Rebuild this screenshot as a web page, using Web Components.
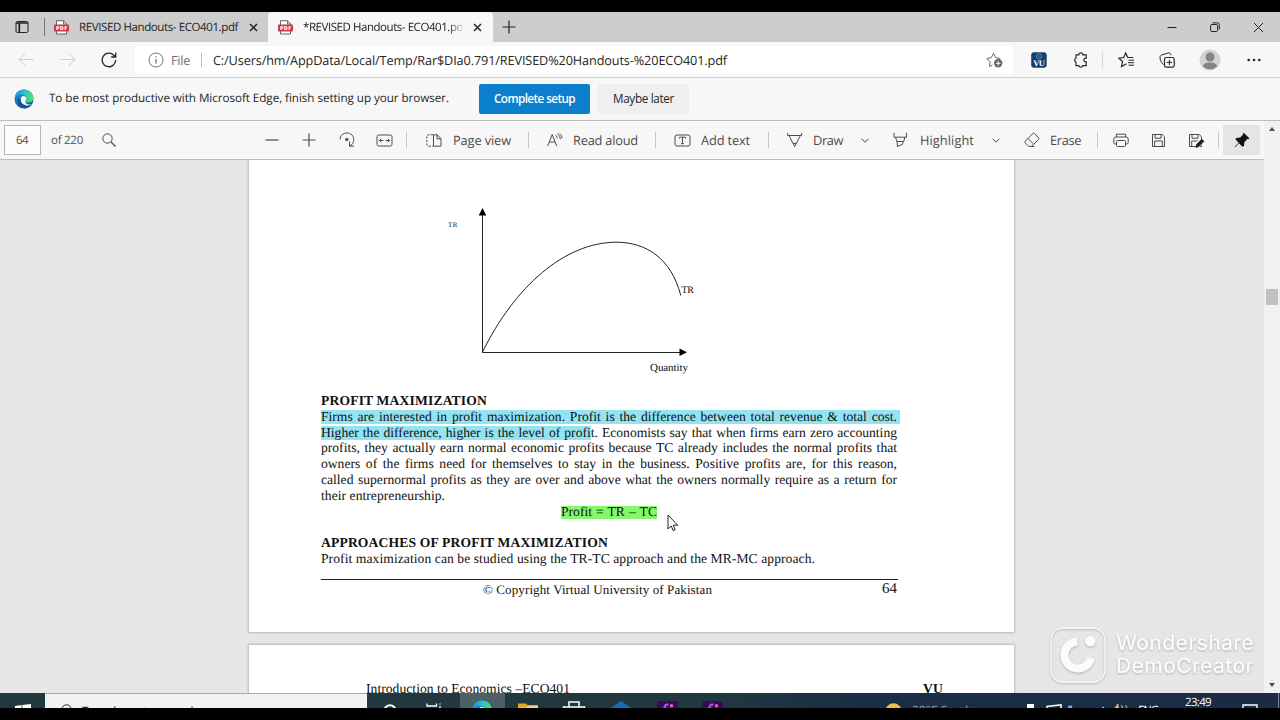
<!DOCTYPE html>
<html lang="en">
<head>
<meta charset="utf-8">
<title>*REVISED Handouts- ECO401.pdf</title>
<style>
  html, body { margin: 0; width: 1280px; height: 720px; overflow: hidden; background: #000; }
</style>
</head>
<body>
<screen-frame></screen-frame>

<script>
// icons: [width, height, markup]
const PDF_ICON = '<path d="M2.5.7h7L12.5 4v10h-10z" fill="#fff" stroke="#555" stroke-width=".9"/><path d="M9.5.7V4h3" fill="none" stroke="#555" stroke-width=".8"/><rect y="4.6" width="15" height="7" rx=".8" fill="#d13548" stroke="none"/><text x="1.9" y="10.1" textLength="11.2" font-family="Open Sans, sans-serif" font-size="5.4" font-weight="800" fill="#fff" stroke="none">PDF</text>';
const EDGE_ICON = '<defs><linearGradient id="a" x1="0" y1=".3" x2="1" y2=".5"><stop offset="0" stop-color="#1795d4"/><stop offset=".5" stop-color="#2bc4cf"/><stop offset="1" stop-color="#58dc62"/></linearGradient><linearGradient id="b" x1="0" y1="0" x2=".5" y2="1"><stop offset="0" stop-color="#1aa0e0"/><stop offset="1" stop-color="#1257a6"/></linearGradient></defs><circle cx="10" cy="10" r="9.5" fill="url(#b)"/><path d="M.6 9C1.3 3.8 5.200.5 10 .5c5.500 0 9.500 3.900 9.500 8.200 0 3-2.200 4.900-5 4.900-2 0-3.100-.8-3.100-1.700 0-.8.8-1.100.8-2.400C12.200 7.200 10 5.600 7.200 5.600 4 5.600 1.500 7 .6 9z" fill="url(#a)"/><path d="M12.200 9.500c0-1.500-1.200-2.500-2.700-2.500C7.700 7 6.500 9 6.500 11.200c0 3.600 3.200 6 6.700 6 2.300 0 4-.8 5.300-2.200-1.300.6-2.700.8-4 .4-2.500-.6-3.700-2.200-3.100-3.500.3-.6.8-1.100.8-2.400z" fill="#f5f9fb"/><path d="M3.800 10.500c-.5 4.500 2.800 8.300 7.400 8.900 3-.3 5.600-1.900 7.200-4.300-1.700 1.300-4.300 1.800-6.900 1.100-3.300-.8-5.200-3.400-5-6.200-.8-.6-2.100-.6-2.700.5z" fill="#164f96"/>';
const FLOPPY = '<path d="M1.500 1.500h9.700l2.300 2.300v9.700h-12z"/><path d="M4 1.500v3.700h6V1.500M3.700 13.500V8h7.600v5.500"/>';
const ICONS = {
  tabs: [14, 14, '<rect x="1" y="1.500" width="12" height="11" rx="1.500"/><path d="M1 3h12M4.300 3v9.500" stroke-width="1.700"/>'],
  pdf: [15, 15, PDF_ICON],
  close: [9, 9, '<path d="M1 1l7 7M8 1L1 8" stroke-width="1.500"/>'],
  plus: [14, 14, '<path d="M7 .5v13M.5 7h13" stroke-width="1.200"/>'],
  minus: [14, 14, '<path d="M.5 7h13" stroke-width="1.200"/>'],
  winMin: [10, 10, '<path d="M.5 5.500h9" stroke-width="1.100"/>'],
  winMax: [10, 10, '<rect x=".6" y="2.500" width="7" height="7" rx="1.300"/><path d="M2.600.9H7.500Q9.300.9 9.300 2.600V7.500"/>'],
  winClose: [11, 11, '<path d="M1 1l9 9M10 1l-9 9"/>'],
  back: [16, 16, '<path d="M15.500 7.500H1M7.500 1L1 7.500 7.500 14"/>'],
  forward: [16, 16, '<path d="M.5 7.500H15M8.500 1L15 7.500 8.500 14"/>'],
  reload: [16, 16, '<path d="M14.700 8A6.800 6.800 0 1 1 12.800 3.200L14.500 5M14.700.5V5H10.200" stroke-width="1.300"/>'],
  info: [16, 16, '<circle cx="8" cy="8" r="7"/><path d="M8 7v4.700M8 4.200v1.300" stroke-width="1.300"/>'],
  starAdd: [17, 16, '<path d="M6.500 13l-3 1.500.7-4.600L.8 6.500l4.500-.8L7.500 1.200l2.200 4.500 4.500.8-1.200 1.200"/><circle cx="12.200" cy="11.300" r="4.200" fill="currentColor" stroke="none"/><path d="M12.200 9v4.600M9.900 11.300h4.600" stroke="#fff"/>'],
  vu: [16, 16, '<rect width="15.500" height="15.500" x=".2" y=".2" rx="3" fill="#123f73" stroke="none"/><circle cx="8" cy="4.200" r="2.600" stroke="#7f9bbb" stroke-width=".7"/><path d="M6 2.500l4 3.500M6 6l4-3.500" stroke="#6686ac" stroke-width=".5"/><text x="2.300" y="13.500" textLength="11.500" font-family="Liberation Serif, serif" font-size="8.500" font-weight="700" fill="#fff" stroke="none">VU</text>'],
  puzzle: [15, 16, '<path d="M3 2.800h2.800a2 2 0 0 1 4 0h3.400v3.400a1.900 1.900 0 1 0 0 3.700v3.800H9.700a2 2 0 0 1-3.900 0H3v-3.600a2 2 0 0 1 0-3.800z" stroke-width="1.200"/>'],
  favorites: [17, 16, '<path d="M8.500 11.800L3.500 14.500l1-5L.9 6.200l4.800-.7L7.700 1l2 4.500h5.600" stroke-width="1.200"/><path d="M10.500 8.200h5.500M10 10.700h6M10.500 13.200h5.500"/>'],
  collections: [16, 16, '<rect x="5.500" y="5.500" width="9.700" height="9.700" rx="1.800" stroke-width="1.200"/><path d="M10.400 7.700v5.300M7.700 10.400H13M4.500 12.700C2.600 11 1 7.800 1 5.500 1 4 1.700 3.300 3 2.900L9.400.9c1.500-.4 2.300.8 2.700 2.500"/>'],
  avatar: [22, 22, '<circle cx="11" cy="11" r="10.500" fill="#d4d2cf" stroke="none"/><circle cx="11" cy="8" r="4.500" fill="#858382" stroke="none"/><path d="M4 17.500c0-3 3-4 7-4s7 1 7 4a10.500 10.500 0 0 1-14 0z" fill="#858382" stroke="none"/>'],
  dots: [14, 4, '<circle cx="1.700" cy="2" r="1.300" fill="currentColor" stroke="none"/><circle cx="7" cy="2" r="1.300" fill="currentColor" stroke="none"/><circle cx="12.300" cy="2" r="1.300" fill="currentColor" stroke="none"/>'],
  edge: [20, 20, `<g stroke="none">${EDGE_ICON}</g>`],
  search: [14, 14, '<circle cx="5.500" cy="5.500" r="4.700"/><path d="M9 9l4.500 4.500" stroke-width="1.200"/>'],
  rotate: [16, 16, '<path d="M1 7.500C1 3.500 4.200 1 8 1c4 0 6.800 3 6.800 6.500 0 3-1.700 5.500-4.300 6.500M10.500 9.500V14.200H15"/><circle cx="7.800" cy="7.500" r="1.200" fill="currentColor"/>'],
  fit: [17, 13, '<rect x="1" y="1" width="15" height="11" rx="1.700"/><path d="M3.500 6.500h4M9.500 6.500h4M5.200 4.700L3.500 6.500l1.700 1.800M11.800 4.700l1.700 1.800-1.700 1.800"/>'],
  pageView: [16, 13, '<path d="M7 .8H3Q.8.800.8 3v7q0 2.200 2.200 2.200h4" stroke-dasharray="2.200 1.300"/><path d="M7.500.8h3.700L15 4.700v7.500H7.500zM11 .8v4h4"/>'],
  readAloud: [16, 14, '<path d="M.7 13L5.200 1.500 9.700 13M2.300 9h5.800M8.500 2.200c1.200.8 1.600 1.900 1.600 3.200M10.300.7c2 1.200 3 3 2.900 5.500M12.500.3c1.500 1.200 2.400 2.900 2.400 5"/>'],
  addText: [17, 13, '<rect x="1" y="1" width="15" height="11" rx="2"/><path d="M5.500 4.500V3.200h6v1.300M8.500 3.200v6.500M7 9.700h3"/>'],
  draw: [16, 16, '<path d="M.7 1v2.500h14V1M2 3.500L7.700 14.500 13.400 3.500M6 11.500h3.400"/>'],
  highlight: [15, 16, '<path d="M1 .8v4.400h12.500V.8M2.700 5.200l1 4.300h7l1.200-4.300M4.300 9.500v5L9.500 12.300l.8-2.800"/>'],
  chevron: [8, 5, '<path d="M.5.700L4 4.200 7.500.7"/>'],
  erase: [16, 16, '<path d="M8.900 1.500L1.200 9.200q-.8.800 0 1.600l3.500 3.500h3l6.900-6.900q.8-.8 0-1.600L10.500 1.500q-.8-.8-1.600 0zM4.200 6.700l5 5M7 14.500h3.500"/>'],
  print: [16, 15, '<path d="M3.300 4V1.200h9.400V4M3.500 11H2.200Q.8 11 .8 9.500V6Q.8 4 2.800 4h10.400q2 0 2 2v3.500q0 1.500-1.400 1.500h-1.300"/><rect x="3.500" y="7.500" width="9" height="6" rx="1"/>'],
  save: [15, 15, FLOPPY],
  saveAs: [16, 15, FLOPPY + '<path d="M8.200 13.200L14 7.300" stroke="#f7f7f7" stroke-width="5.500"/><path d="M8 14.300l.6-2.800 5.200-5.200 2 2-5.100 5.300z" fill="#222" stroke="#222"/>'],
  pin: [16, 16, '<path d="M9.700.7l5.600 5.600-1 1-1-.2-3 3.200-.3 3.400-1.500 1L5 11.200 1 15.200l-.4-.4L4.700 10.700 1.300 7.300l1.200-1.400 3.700-.3 3-3-.3-1z" fill="currentColor" stroke="none"/>'],
  cursor: [12, 18, '<path d="M1 1v14l3.200-3 2 4.600 2-.8-2-4.600h4.500z" fill="#fff" stroke="#222"/>'],
  logo: [56, 56, '<rect x="1" y="1" width="54" height="54" rx="12" stroke="#fff" stroke-width="1.300"/><path d="M27.500 14.500a13.500 13.500 0 1 0 13.500 16.500" stroke="#fff" stroke-width="8"/><circle cx="40.300" cy="14.300" r="5.300" fill="#fff" stroke="none"/>'],
  // taskbar glyphs, only their upper part is on screen
  windows: [16, 16, '<path d="M0 2l6.500-1v7H0zM7.300.9L16 0v8H7.300z" fill="#fff" stroke="none"/>'],
  cortana: [14, 14, '<circle cx="7" cy="7" r="5.700" stroke-width="2"/>'],
  taskView: [16, 14, '<path d="M1 .5v2.500h9.500V.5M14 .5v1M14 3v4" stroke-width="1.300"/>'],
  folder: [20, 16, '<path d="M0 .5h8l1.500 1.500H20v14H0z" fill="#e4a42c" stroke="none"/><path d="M0 4.500h8.500L10 3h10v13H0z" fill="#fbd46d" stroke="none"/>'],
  store: [22, 18, '<path d="M6 6V1h10v5M.5 6h21v11H.5z" stroke-width="1.500"/>'],
  mail: [24, 18, '<path d="M0 8L12 0l12 8v10H0z" fill="#176db6" stroke="none"/>'],
  filmora: [21, 16, '<rect width="21" height="18" rx="2" fill="#370b58" stroke="none"/><path d="M11.500 3.700q-4-1-4 2.800v7M5.500 7.500h5" stroke="#b65af0" stroke-width="1.800"/><circle cx="14.500" cy="4.800" r="1.800" fill="#e85ab9" stroke="none"/>'],
  sun: [17, 17, '<circle cx="8.500" cy="8.500" r="8.200" fill="#f0c43c" stroke="none"/>'],
  battery: [7, 12, '<path d="M0 0h7v12H0z" fill="#fff" stroke="none"/>'],
  note: [16, 14, '<path d="M1 12V2.500L15 .8V12" stroke-width="1.500"/>'],
  action: [16, 14, '<path d="M1 14V1h14v13" stroke-width="1.400"/>'],
};

class UiIcon extends HTMLElement {
  connectedCallback() {
    const [w, h, body] = ICONS[this.getAttribute('name')];
    this.attachShadow({ mode: 'open' }).innerHTML = `
      <style>
        :host { display: block; flex: none; width: ${w}px; height: ${h}px; }
        svg { display: block; overflow: visible; }
      </style>
      <svg width="${w}" height="${h}" viewBox="0 0 ${w} ${h}" fill="none" stroke="currentColor" stroke-width="1">${body}</svg>`;
  }
}

// One line of text, tracked so that it fills the given width
class FitText extends HTMLElement {
  connectedCallback() {
    const w = Number(this.getAttribute('w'));
    this.attachShadow({ mode: 'open' }).innerHTML = `
      <style>
        :host { display: block; flex: none; width: ${w}px; white-space: nowrap; }
        span { display: inline-block; }
      </style>
      <span><slot></slot></span>`;
    const span = this.shadowRoot.querySelector('span');
    const natural = span.getBoundingClientRect().width;
    span.style.letterSpacing = `${(w - natural) / this.textContent.length}px`;
  }
}

function define(name, html) {
  customElements.define(name, class extends HTMLElement {
    connectedCallback() {
      if (this.shadowRoot) return;
      this.attachShadow({ mode: 'open' }).innerHTML = html;
    }
  });
}

// icon / text placed after a gap in a row
const icon = (name, gap, style = '') => `<ui-icon name="${name}" style="margin-left:${gap}px;${style}"></ui-icon>`;
const text = (str, w, gap, style = '') => `<fit-text w="${w}" style="margin-left:${gap}px;${style}">${str}</fit-text>`;
const rule = (gap, h = 16, color = '#c6c6c6') => `<i style="flex:none;width:1px;height:${h}px;margin-left:${gap}px;background:${color}"></i>`;

customElements.define('ui-icon', UiIcon);
customElements.define('fit-text', FitText);

define('tab-strip', `
  <style>
    :host { display: flex; align-items: center; height: 30px; background: #cdcdcd; color: #222; font-size: 11.500px; }
    .active { display: flex; align-items: center; width: 225px; height: 30px; margin-left: 10px; border-radius: 4px 4px 0 0; background: #f7f7f7; }
    .fade { width: 159px; margin-left: 10px; overflow: hidden; -webkit-mask-image: linear-gradient(90deg, #000 145px, transparent 162px); mask-image: linear-gradient(90deg, #000 145px, transparent 162px); }
  </style>
  ${icon('tabs', 15)}${rule(15, 18, '#777')}
  ${icon('pdf', 9)}${text('REVISED Handouts- ECO401.pdf', 159, 10)}${icon('close', 11)}
  <div class="active">
    ${icon('pdf', 10)}<div class="fade">${text('*REVISED Handouts- ECO401.pdf', 163.5, 0)}</div>${icon('close', 11)}
  </div>
  ${icon('plus', 9)}
  ${icon('winMin', 651)}${icon('winMax', 33)}${icon('winClose', 33)}
`);

define('address-bar', `
  <style>
    :host { display: flex; align-items: center; box-sizing: border-box; height: 36px; background: #f7f7f7; border-bottom: 1px solid #d2d2d2; color: #262626; font-size: 12.700px; }
    .omnibox { display: flex; align-items: center; width: 878px; height: 28px; margin-left: 18px; border-radius: 3px; background: #fff; }
  </style>
  ${icon('back', 18, 'color:#cfcfcf')}${icon('forward', 26, 'color:#cfcfcf')}${icon('reload', 25)}
  <div class="omnibox">
    ${icon('info', 13, 'color:#777')}${text('File', 19, 7, 'color:#707070')}${rule(11, 14, '#bbb')}
    ${text('C:/Users/hm/AppData/Local/Temp/Rar$DIa0.791/REVISED%20Handouts-%20ECO401.pdf', 514, 11)}
    ${icon('starAdd', 259, 'color:#666')}
  </div>
  ${icon('vu', 18)}${icon('puzzle', 26)}${rule(14, 16, '#d5d5d5')}
  ${icon('favorites', 15)}${icon('collections', 24)}${icon('avatar', 24)}${icon('dots', 26)}
`);

define('setup-banner', `
  <style>
    :host { display: flex; align-items: center; box-sizing: border-box; height: 43px; background: #f7f7f7; border-bottom: 1px solid #bcbcbc; color: #262626; font-size: 11.700px; }
    fit-text { padding-bottom: 2px; }
    button { display: flex; align-items: center; height: 30px; padding: 0; border: 0; border-radius: 2px; font: inherit; color: inherit; }
    .primary { width: 111px; margin-left: 30px; background: #0b7fcb; color: #fff; font-weight: 600; }
    .plain { width: 91px; margin-left: 8px; background: #efefef; }
  </style>
  ${icon('edge', 14)}${text('To be most productive with Microsoft Edge, finish setting up your browser.', 400, 15)}
  <button class="primary">${text('Complete setup', 81, 15)}</button>
  <button class="plain">${text('Maybe later', 61, 15)}</button>
`);

define('pdf-toolbar', `
  <style>
    :host { display: flex; align-items: center; box-sizing: border-box; height: 39px; background: #f7f7f7; border-bottom: 1px solid #bcbcbc; color: #4c4c4c; font-size: 12.800px; }
    .page { display: flex; align-items: center; box-sizing: border-box; width: 37px; height: 30px; margin-left: 4px; border: 1px solid #b4b4b4; background: #fbfbfb; font-size: 11.500px; }
    .pin { display: flex; align-items: center; width: 37px; height: 30px; margin-left: 4px; background: #e5e5e5; color: #111; }
  </style>
  <div class="page">${text('64', 12, 11)}</div>${text('of 220', 32, 10, 'font-size:11.500px')}${icon('search', 19)}
  ${icon('minus', 149)}${icon('plus', 23)}${icon('rotate', 23)}${icon('fit', 21)}${rule(13)}
  ${icon('pageView', 19)}${text('Page view', 58, 11)}${rule(17)}
  ${icon('readAloud', 18)}${text('Read aloud', 65, 10)}${rule(17)}
  ${icon('addText', 18)}${text('Add text', 49, 10)}${rule(18)}
  ${icon('draw', 18)}${text('Draw', 30, 10)}${icon('chevron', 18)}
  ${icon('highlight', 24)}${text('Highlight', 54, 12)}${icon('chevron', 18)}
  ${icon('erase', 24)}${text('Erase', 31, 10)}${rule(16)}
  ${icon('print', 15)}${icon('save', 22)}${icon('saveAs', 22)}${rule(14)}
  <div class="pin">${icon('pin', 11)}</div>
`);

define('revenue-chart', `
  <style>
    :host { display: block; height: 200px; }
    svg { display: block; font-family: "Liberation Serif", serif; }
  </style>
  <svg width="765" height="200" viewBox="249 190 765 200" fill="none" stroke="#222">
    <path d="M482.500 213V352.500H682"/>
    <path d="M482.500 352C515 286 565 242.500 616 242.200C646 242.200 671 258 680.800 295.500"/>
    <path d="M482.500 208l3.800 7.500h-7.600zM687 352.300l-7.500 3.700v-7.400z" fill="#000" stroke="none"/>
    <g fill="#111" stroke="none">
      <text x="448" y="227" font-size="7" textLength="9.500">TR</text>
      <text x="681.500" y="293" font-size="10" textLength="12.500">TR</text>
      <text x="650" y="370.500" font-size="11" textLength="38">Quantity</text>
    </g>
  </svg>
`);

define('pdf-page', `
  <style>
    :host { display: block; box-sizing: border-box; width: 765px; background: #fff; box-shadow: 0 0 2px 1px rgba(0,0,0,.2); color: #111; font: 13.600px/15.800px "Liberation Serif", serif; }
  </style>
  <slot></slot>
`);

define('handout-text', `
  <style>
    :host { display: block; width: 576px; margin: 3px 0 0 72px; }
    b, p { display: block; margin: 0; height: 15.800px; white-space: nowrap; }
    p.full { text-align-last: justify; white-space: normal; }
    mark { color: inherit; background: linear-gradient(#93e3f2, #93e3f2) 0 1.500px / 100% 14px no-repeat; }
    .line { width: 579px; background: linear-gradient(#93e3f2, #93e3f2) 0 1.500px / 100% 14px no-repeat; box-sizing: border-box; padding-right: 3px; }
    .formula { display: flex; padding-left: 240px; }
    .formula span { width: 96px; background: linear-gradient(#83f86b, #83f86b) 0 2px / 100% 14px no-repeat; text-align-last: justify; }
    hr { width: 577px; height: 1px; margin: 12.700px 0 0; border: 0; background: #222; }
    footer { display: flex; align-items: center; height: 18px; }
  </style>
  <b>${text('PROFIT MAXIMIZATION', 166, 0)}</b>
  <p class="full line">Firms are interested in profit maximization. Profit is the difference between total revenue &amp; total cost.</p>
  <p class="full"><mark>Higher the difference, higher is the level of profi</mark>t. Economists say that when firms earn zero accounting</p>
  <p class="full">profits, they actually earn normal economic profits because TC already includes the normal profits that</p>
  <p class="full">owners of the firms need for themselves to stay in the business. Positive profits are, for this reason,</p>
  <p class="full">called supernormal profits as they are over and above what the owners normally require as a return for</p>
  <p>${text('their entrepreneurship.', 124, 0)}</p>
  <p class="formula"><span>Profit = TR – TC</span></p>
  <p></p>
  <b>${text('APPROACHES OF PROFIT MAXIMIZATION', 287, 0)}</b>
  <p>${text('Profit maximization can be studied using the TR-TC approach and the MR-MC approach.', 494, 0)}</p>
  <hr>
  <footer>${text('© Copyright Virtual University of Pakistan', 229, 162, 'font-size:13px')}${text('64', 15, 170, 'font-size:15px')}</footer>
`);

define('scroll-bar', `
  <style>
    :host { display: flex; flex-direction: column; align-items: center; justify-content: space-between; width: 16px; background: #f1f1f1; }
    i { border: 3.500px solid transparent; }
    .up { border-bottom: 4px solid #505050; margin-top: 3px; }
    .down { border-top: 4px solid #505050; margin-bottom: 3px; }
    .thumb { width: 12px; height: 16px; margin-bottom: 220px; background: #c1c1c1; }
  </style>
  <i class="up"></i><div class="thumb"></div><i class="down"></i>
`);

define('demo-watermark', `
  <style>
    :host { display: flex; align-items: center; gap: 10px; color: #fff; opacity: .85; font: 500 21px/23px Inter, sans-serif; filter: drop-shadow(0 1px 1px rgba(0,0,0,.28)); }
  </style>
  <ui-icon name="logo"></ui-icon>
  <div>${text('Wondershare', 138, 0)}${text('DemoCreator', 138, 0)}</div>
`);

define('pdf-viewer', `
  <style>
    :host { display: flex; height: 572px; background: #e6e6e6; }
    .main { flex: 1; display: flex; flex-direction: column; min-width: 0; overflow: hidden; }
    .pages { position: relative; flex: 1; min-height: 0; padding-left: 249px; overflow: hidden; }
    .first { height: 472px; padding-top: 30px; }
    .second { height: 60px; margin-top: 13px; padding: 36px 71px 0 117px; }
    .head { display: flex; justify-content: space-between; }
    demo-watermark { position: absolute; left: 1050px; top: 467px; }
    .pointer { position: absolute; left: 667px; top: 354px; }
  </style>
  <div class="main">
    <pdf-toolbar></pdf-toolbar>
    <div class="pages">
      <pdf-page class="first"><revenue-chart></revenue-chart><handout-text></handout-text></pdf-page>
      <pdf-page class="second"><div class="head">${text('Introduction to Economics –ECO401', 204, 0)}<b>${text('VU', 20, 0)}</b></div></pdf-page>
      <ui-icon class="pointer" name="cursor"></ui-icon>
      <demo-watermark></demo-watermark>
    </div>
  </div>
  <scroll-bar></scroll-bar>
`);

define('task-bar', `
  <style>
    :host { display: flex; align-items: flex-start; height: 15px; overflow: hidden; background: linear-gradient(90deg, #21383f 0, #21383f 55%, #1c2d46 68%, #1b2b45); color: #fff; font-size: 11.500px; line-height: 16px; }
    .search { display: flex; box-sizing: border-box; width: 322px; height: 15px; margin-left: 14px; overflow: hidden; border-top: 1px solid #aaa; background: #f2f2f2; color: #222; }
    .open { width: 45px; height: 15px; margin-left: 18px; background: #4c6067; overflow: hidden; }
  </style>
  ${icon('windows', 15, 'margin-top:11px')}
  <div class="search">${icon('search', 16, 'margin-top:10px')}${text('Type here to search', 116, 7, 'margin-top:10px')}</div>
  ${icon('cortana', 16, 'margin-top:11px')}${icon('taskView', 29, 'margin-top:10px')}
  <div class="open">${icon('edge', 12, 'margin-top:7px')}</div>
  ${icon('folder', 13, 'margin-top:10px')}${icon('store', 25, 'margin-top:8px')}${icon('mail', 24, 'margin-top:8px')}
  ${icon('filmora', 24, 'margin-top:8px')}${icon('filmora', 24, 'margin-top:8px')}
  ${icon('sun', 162, 'margin-top:10px')}${text('28°C Smoke', 66, 10, 'margin-top:10px;color:#9aa6b0')}
  ${icon('battery', 49, 'margin-top:11px')}${icon('note', 12, 'margin-top:11px')}
  ${text('ʺ', 5, 6, 'margin-top:10px')}${text('^', 6, 27, 'margin-top:11px')}${text('⁴⁾⁾', 14, 9, 'margin-top:10px')}
  ${text('ENG', 20, 9, 'margin-top:10px')}${text('23:49', 26, 27, 'margin-top:2px')}
  ${icon('action', 31, 'margin-top:11px')}${rule(20, 15, '#7b8796')}
`);

define('screen-frame', `
  <style>
    :host { display: flex; flex-direction: column; box-sizing: border-box; width: 1280px; height: 720px; padding: 12px 0; background: #000; font-family: "Open Sans", "Noto Sans", sans-serif; text-rendering: geometricPrecision; }
  </style>
  <tab-strip></tab-strip>
  <address-bar></address-bar>
  <setup-banner></setup-banner>
  <pdf-viewer></pdf-viewer>
  <task-bar></task-bar>
`);
</script>
</body>
</html>
